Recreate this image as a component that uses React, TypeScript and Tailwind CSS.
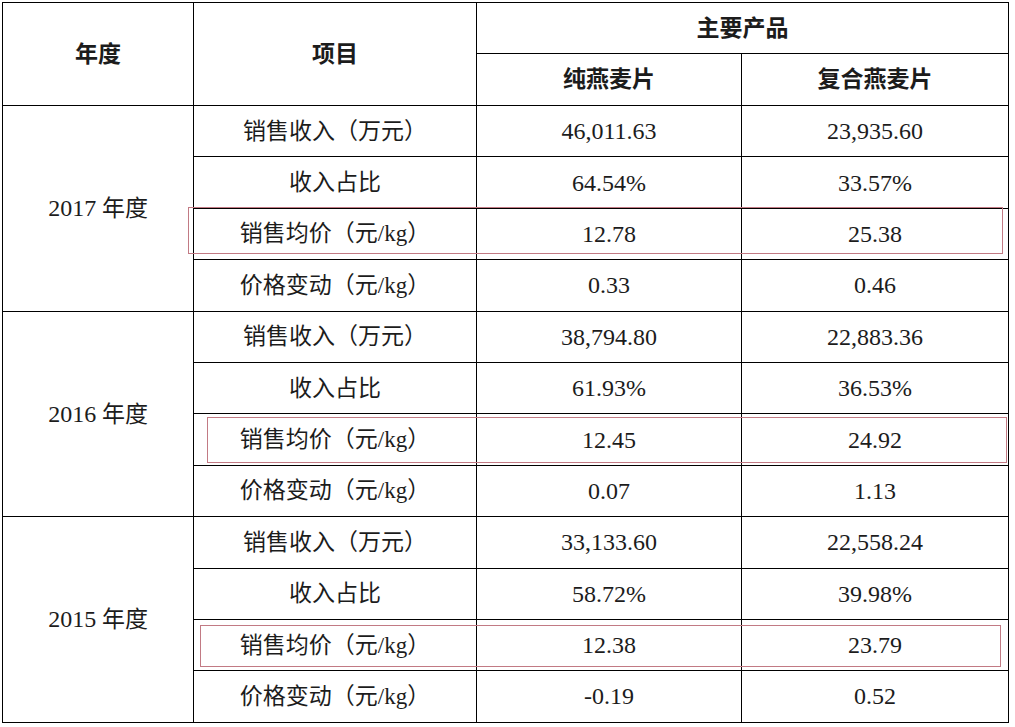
import React from 'react';

type Row = { label: string; a: string; b: string };
type YearBlock = { year: string; rows: Row[] };

const data: YearBlock[] = [
  {
    year: '2017',
    rows: [
      { label: '销售收入（万元）', a: '46,011.63', b: '23,935.60' },
      { label: '收入占比', a: '64.54%', b: '33.57%' },
      { label: '销售均价（元/kg）', a: '12.78', b: '25.38' },
      { label: '价格变动（元/kg）', a: '0.33', b: '0.46' },
    ],
  },
  {
    year: '2016',
    rows: [
      { label: '销售收入（万元）', a: '38,794.80', b: '22,883.36' },
      { label: '收入占比', a: '61.93%', b: '36.53%' },
      { label: '销售均价（元/kg）', a: '12.45', b: '24.92' },
      { label: '价格变动（元/kg）', a: '0.07', b: '1.13' },
    ],
  },
  {
    year: '2015',
    rows: [
      { label: '销售收入（万元）', a: '33,133.60', b: '22,558.24' },
      { label: '收入占比', a: '58.72%', b: '39.98%' },
      { label: '销售均价（元/kg）', a: '12.38', b: '23.79' },
      { label: '价格变动（元/kg）', a: '-0.19', b: '0.52' },
    ],
  },
];

const cell = 'border border-black text-center align-middle p-0';

export default function App() {
  return (
    <div className="relative w-[1015px] h-[727px] bg-white text-[#1c1c1c] font-['Liberation_Serif','Noto_Sans_CJK_SC',serif]">
      <div className="pt-[2px] pl-[2px]">
        <table className="border-collapse table-fixed w-[1006px] text-[23px] leading-none">
          <colgroup>
            <col className="w-[191px]" />
            <col className="w-[283px]" />
            <col className="w-[265px]" />
            <col className="w-[267px]" />
          </colgroup>
          <thead>
            <tr className="h-[51px]">
              <th rowSpan={2} className={`${cell} font-bold`}>年度</th>
              <th rowSpan={2} className={`${cell} font-bold`}>项目</th>
              <th colSpan={2} className={`${cell} font-bold`}>主要产品</th>
            </tr>
            <tr className="h-[52px]">
              <th className={`${cell} font-bold`}>纯燕麦片</th>
              <th className={`${cell} font-bold`}>复合燕麦片</th>
            </tr>
          </thead>
          <tbody>
            {data.map((block) =>
              block.rows.map((row, i) => (
                <tr key={block.year + i} className="h-[51.4px]">
                  {i === 0 && (
                    <td rowSpan={4} className={`${cell} font-normal`}>
                      <span className="text-[24px]">{block.year}</span> 年度
                    </td>
                  )}
                  <td className={cell}>{row.label}</td>
                  <td className={`${cell} text-[24px]`}>{row.a}</td>
                  <td className={`${cell} text-[24px]`}>{row.b}</td>
                </tr>
              ))
            )}
          </tbody>
        </table>
      </div>

      {/* red highlight boxes drawn over the table */}
      <div className="absolute left-[188px] top-[207px] w-[815px] h-[47px] border border-[#c27a84]" />
      <div className="absolute left-[207px] top-[417px] w-[800px] h-[46px] border border-[#c27a84]" />
      <div className="absolute left-[200px] top-[625px] w-[801px] h-[42px] border border-[#c27a84]" />
    </div>
  );
}
